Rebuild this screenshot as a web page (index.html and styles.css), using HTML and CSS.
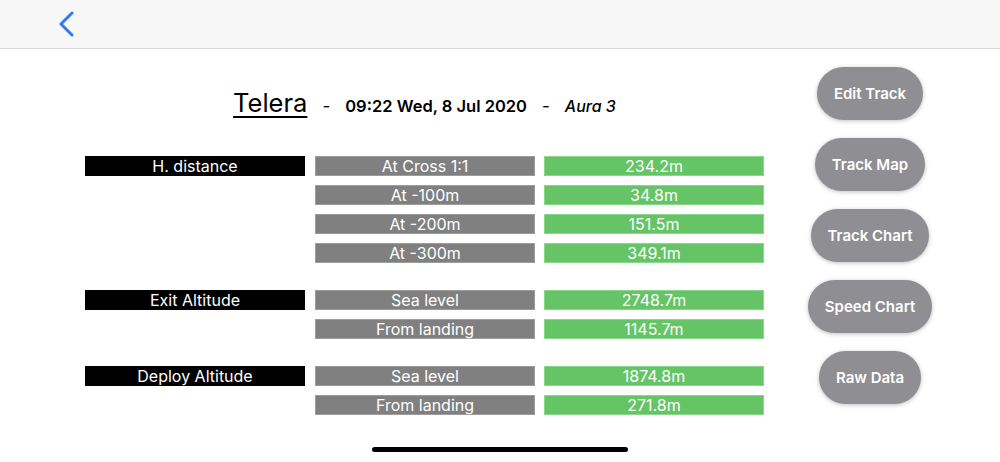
FILE: index.html
```html
<!DOCTYPE html>
<html lang="en">
<head>
  <meta charset="UTF-8">
  <meta name="viewport" content="width=device-width, initial-scale=1.0">
  <title>Jump Summary</title>
  <link rel="stylesheet" href="styles.css">
</head>
<body>

  <!-- Navigation bar -->
  <header class="nav-bar">
    <a class="back-button" href="#" aria-label="Back">
      <svg width="20" height="30" viewBox="0 0 20 30">
        <path d="M13 3 L2 14 L13 25" fill="none" stroke="#3478f6" stroke-width="3" stroke-linecap="round" stroke-linejoin="round"/>
      </svg>
    </a>
  </header>

  <main class="content">
    <!-- Summary -->
    <section class="summary">
      <div class="summary-title">
        <span class="dropzone">Telera</span>
        <span class="dash">-</span>
        <span class="jump-date">09:22 Wed, 8 Jul 2020</span>
        <span class="dash">-</span>
        <span class="device">Aura 3</span>
      </div>

      <div class="stat-group">
        <div class="stat-row">
          <div class="cell cell-label">H. distance</div>
          <div class="cell cell-key">At Cross 1:1</div>
          <div class="cell cell-value">234.2m</div>
        </div>
        <div class="stat-row">
          <div class="cell cell-empty"></div>
          <div class="cell cell-key">At -100m</div>
          <div class="cell cell-value">34.8m</div>
        </div>
        <div class="stat-row">
          <div class="cell cell-empty"></div>
          <div class="cell cell-key">At -200m</div>
          <div class="cell cell-value">151.5m</div>
        </div>
        <div class="stat-row">
          <div class="cell cell-empty"></div>
          <div class="cell cell-key">At -300m</div>
          <div class="cell cell-value">349.1m</div>
        </div>
      </div>

      <div class="stat-group">
        <div class="stat-row">
          <div class="cell cell-label">Exit Altitude</div>
          <div class="cell cell-key">Sea level</div>
          <div class="cell cell-value">2748.7m</div>
        </div>
        <div class="stat-row">
          <div class="cell cell-empty"></div>
          <div class="cell cell-key">From landing</div>
          <div class="cell cell-value">1145.7m</div>
        </div>
      </div>

      <div class="stat-group">
        <div class="stat-row">
          <div class="cell cell-label">Deploy Altitude</div>
          <div class="cell cell-key">Sea level</div>
          <div class="cell cell-value">1874.8m</div>
        </div>
        <div class="stat-row">
          <div class="cell cell-empty"></div>
          <div class="cell cell-key">From landing</div>
          <div class="cell cell-value">271.8m</div>
        </div>
      </div>
    </section>

    <!-- Actions -->
    <nav class="actions">
      <button class="action-button">Edit Track</button>
      <button class="action-button">Track Map</button>
      <button class="action-button">Track Chart</button>
      <button class="action-button">Speed Chart</button>
      <button class="action-button">Raw Data</button>
    </nav>
  </main>

  <div class="home-indicator"></div>

</body>
</html>
```

FILE: styles.css
```css
body {
  font-family: Inter, 'Liberation Sans', Arial, sans-serif;
  background-color: #fff;
  margin: 0;
  padding: 0;
  height: 462px;
  overflow: hidden;
}

.nav-bar {
  height: 49px;
  background-color: #f7f7f7;
  border-bottom: 1px solid #d9d9d9;
  box-sizing: border-box;
  display: flex;
  align-items: center;
}

.back-button {
  display: block;
  margin-left: 59px;
  margin-top: 2px;
  height: 30px;
}

.content {
  display: flex;
  align-items: flex-start;
}

.summary {
  width: 679px;
  margin-left: 85px;
  padding-top: 38px;
}

.summary-title {
  height: 36px;
  display: flex;
  justify-content: center;
  align-items: baseline;
  gap: 15px;
  margin-bottom: 33px;
  color: #000;
}

.dropzone {
  font-size: 25.5px;
  text-decoration: underline;
  text-decoration-thickness: 2px;
  text-underline-offset: 4px;
}

.dash {
  font-size: 17px;
}

.jump-date {
  font-size: 16.5px;
  font-weight: 600;
}

.device {
  font-size: 16px;
  font-style: italic;
  font-weight: 500;
}

.stat-group {
  display: flex;
  flex-direction: column;
  gap: 9px;
  margin-bottom: 27px;
}

.stat-row {
  display: flex;
  gap: 9px;
}

.cell {
  width: 220px;
  height: 20px;
  box-sizing: border-box;
  color: #fff;
  font-size: 16px;
  line-height: 20px;
  text-align: center;
}

.cell-label {
  background-color: #000;
  margin-right: 1px;
}

.cell-empty {
  margin-right: 1px;
}

.cell-key {
  background-color: #808080;
  border: 1px solid #9c9c9c;
  line-height: 18px;
}

.cell-value {
  background-color: #65c466;
  border: 1px solid #8ad68b;
  line-height: 18px;
}

.actions {
  width: 140px;
  margin-left: 36px;
  padding-top: 18px;
  display: flex;
  flex-direction: column;
  align-items: center;
  gap: 18px;
}

.action-button {
  height: 53px;
  padding: 0 17px;
  border: none;
  border-radius: 27px;
  background-color: #8e8e93;
  color: #fff;
  font-family: Inter, 'Liberation Sans', Arial, sans-serif;
  font-size: 15px;
  font-weight: 600;
  box-shadow: 0 1px 4px rgba(0, 0, 0, 0.25);
  cursor: pointer;
}

.home-indicator {
  position: absolute;
  left: 372px;
  top: 447px;
  width: 256px;
  height: 5px;
  border-radius: 3px;
  background-color: #000;
}
```
